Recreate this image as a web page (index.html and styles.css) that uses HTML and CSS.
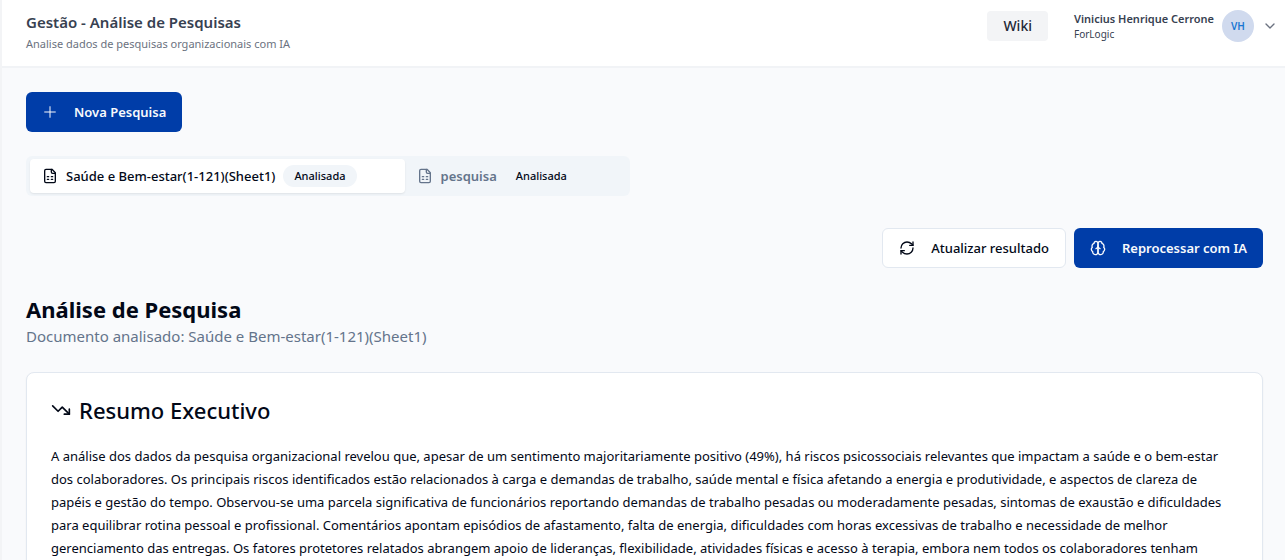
FILE: index.html
```html
<!DOCTYPE html>
<html lang="pt-BR">

<head>
    <meta charset="UTF-8">
    <meta name="viewport" content="width=device-width, initial-scale=1">
    <title>Gestão - Análise de Pesquisas</title>
    <link rel="stylesheet" href="styles.css">
</head>

<body>
    <header class="topbar">
        <div class="topbar-title">
            <h1>Gestão - Análise de Pesquisas</h1>
            <p>Analise dados de pesquisas organizacionais com IA</p>
        </div>
        <div class="topbar-right">
            <button type="button" class="wiki">Wiki</button>
            <button type="button" class="user">
                <span class="user-info">
                    <span class="user-name">Vinicius Henrique Cerrone</span>
                    <span class="user-company">ForLogic</span>
                </span>
                <span class="avatar">VH</span>
                <svg class="icon chevron" viewBox="0 0 24 24"><path d="m6 9 6 6 6-6"/></svg>
            </button>
        </div>
    </header>

    <main class="content">
        <button type="button" class="btn btn-primary">
            <svg class="icon thin" viewBox="0 0 24 24"><path d="M4 12h16M12 4v16"/></svg>
            Nova Pesquisa
        </button>

        <div class="tabs" role="tablist">
            <button type="button" class="tab active" role="tab" aria-selected="true">
                <svg class="icon" viewBox="0 0 24 24"><path d="M15 2H6a2 2 0 0 0-2 2v16a2 2 0 0 0 2 2h12a2 2 0 0 0 2-2V7Z"/><path d="M14 2v4a2 2 0 0 0 2 2h4M8 13h2M14 13h2M8 17h2M14 17h2"/></svg>
                <span>Saúde e Bem-estar(1-121)(Sheet1)</span>
                <span class="badge">Analisada</span>
            </button>
            <button type="button" class="tab" role="tab" aria-selected="false">
                <svg class="icon" viewBox="0 0 24 24"><path d="M15 2H6a2 2 0 0 0-2 2v16a2 2 0 0 0 2 2h12a2 2 0 0 0 2-2V7Z"/><path d="M14 2v4a2 2 0 0 0 2 2h4M8 13h2M14 13h2M8 17h2M14 17h2"/></svg>
                <span>pesquisa</span>
                <span class="badge">Analisada</span>
            </button>
        </div>

        <div class="actions">
            <button type="button" class="btn btn-outline">
                <svg class="icon" viewBox="0 0 24 24"><path d="M3 12a9 9 0 0 1 9-9 9.75 9.75 0 0 1 6.74 2.74L21 8"/><path d="M21 3v5h-5"/><path d="M21 12a9 9 0 0 1-9 9 9.75 9.75 0 0 1-6.74-2.74L3 16"/><path d="M8 16H3v5"/></svg>
                Atualizar resultado
            </button>
            <button type="button" class="btn btn-primary">
                <svg class="icon" viewBox="0 0 24 24"><path d="M12 5a3 3 0 1 0-5.997.125 4 4 0 0 0-2.526 5.77 4 4 0 0 0 .556 6.588A4 4 0 1 0 12 18Z"/><path d="M12 5a3 3 0 1 1 5.997.125 4 4 0 0 1 2.526 5.77 4 4 0 0 1-.556 6.588A4 4 0 1 1 12 18Z"/><path d="M15 13a4.5 4.5 0 0 1-3-4 4.5 4.5 0 0 1-3 4"/></svg>
                Reprocessar com IA
            </button>
        </div>

        <div class="heading">
            <h2>Análise de Pesquisa</h2>
            <p>Documento analisado: Saúde e Bem-estar(1-121)(Sheet1)</p>
        </div>

        <section class="card">
            <h3>
                <svg class="icon icon-lg" viewBox="0 0 24 24"><path d="m22 17-8.5-8.5-5 5L2 7"/><path d="M16 17h6v-6"/></svg>
                Resumo Executivo
            </h3>
            <p>
                A análise dos dados da pesquisa organizacional revelou que, apesar de um sentimento majoritariamente positivo (49%), há riscos psicossociais relevantes que impactam a saúde e o bem-estar<br>
                dos colaboradores. Os principais riscos identificados estão relacionados à carga e demandas de trabalho, saúde mental e física afetando a energia e produtividade, e aspectos de clareza de<br>
                papéis e gestão do tempo. Observou-se uma parcela significativa de funcionários reportando demandas de trabalho pesadas ou moderadamente pesadas, sintomas de exaustão e dificuldades<br>
                para equilibrar rotina pessoal e profissional. Comentários apontam episódios de afastamento, falta de energia, dificuldades com horas excessivas de trabalho e necessidade de melhor<br>
                gerenciamento das entregas. Os fatores protetores relatados abrangem apoio de lideranças, flexibilidade, atividades físicas e acesso à terapia, embora nem todos os colaboradores tenham
            </p>
        </section>
    </main>
</body>

</html>
```

FILE: styles.css
```css
* {
    box-sizing: border-box;
}

body {
    margin: 0;
    min-height: 100vh;
    border-left: 2px solid #f3f4f6;
    background: #f9fafc;
    color: #020817;
    font-family: "Noto Sans", "Open Sans", sans-serif;
    font-size: 13px;
    line-height: 20px;
}

h1,
h2,
h3,
p {
    margin: 0;
}

button {
    border: 0;
    padding: 0;
    background: none;
    color: inherit;
    font: inherit;
    cursor: pointer;
}

.icon {
    width: 16px;
    height: 16px;
    flex: none;
    fill: none;
    stroke: currentColor;
    stroke-width: 2;
    stroke-linecap: round;
    stroke-linejoin: round;
}

.thin {
    stroke-width: 1.5;
}

/* header */
.topbar {
    display: flex;
    justify-content: space-between;
    align-items: flex-start;
    height: 68px;
    padding: 10px 7px 0 24px;
    background: #fff;
    border-bottom: 2px solid #f1f3f6;
}

.topbar-title h1 {
    color: #374151;
    font-size: 15px;
    font-weight: 600;
    line-height: 24px;
}

.topbar-title p {
    color: #6b7280;
    font-size: 11px;
    line-height: 20px;
}

.topbar-right {
    display: flex;
    align-items: center;
    gap: 26px;
}

.wiki {
    padding: 5px 16px;
    border-radius: 4px;
    background: #f3f4f6;
    color: #1f2937;
    font-size: 14px;
    font-weight: 500;
}

.user {
    display: flex;
    align-items: center;
    gap: 8px;
}

.user-info {
    display: flex;
    flex-direction: column;
    color: #374151;
    text-align: left;
}

.user-name {
    font-size: 11px;
    font-weight: 600;
    line-height: 16px;
}

.user-company {
    font-size: 10px;
    line-height: 14px;
}

.avatar {
    width: 32px;
    border-radius: 50%;
    background: #d0daee;
    color: #1976d2;
    font-size: 10px;
    font-weight: 600;
    line-height: 32px;
    text-align: center;
}

.chevron {
    color: #6b7280;
}

/* page */
.content {
    display: flex;
    flex-direction: column;
    align-items: flex-start;
    padding: 24px 22px 24px 24px;
}

.btn {
    display: flex;
    align-items: center;
    gap: 16px;
    height: 40px;
    padding: 0 16px;
    border-radius: 6px;
    font-weight: 600;
    white-space: nowrap;
}

.btn-primary {
    background: #003da8;
    color: #f8fafc;
}

.btn-outline {
    border: 1px solid #e2e8f0;
    background: #fff;
    font-weight: 500;
}

.tabs {
    display: grid;
    grid-template-columns: auto auto;
    margin-top: 24px;
    padding: 3px 4px;
    border-radius: 6px;
    background: #f1f5f9;
    color: #64748b;
}

.tab {
    display: flex;
    align-items: center;
    gap: 8px;
    height: 34px;
    padding: 0 48px 0 12px;
    border-radius: 4px;
    font-weight: 600;
    white-space: nowrap;
}

.tab.active {
    background: #fff;
    color: #020817;
    box-shadow: 0 1px 2px rgba(0, 0, 0, 0.08);
    font-weight: 500;
}

.badge {
    padding: 3px 11px;
    border-radius: 11px;
    background: #f1f5f9;
    color: #020817;
    font-size: 11px;
    font-weight: 500;
    line-height: 16px;
}

.actions {
    display: flex;
    align-self: flex-end;
    gap: 8px;
    margin-top: 32px;
}

.heading {
    margin-top: 25px;
}

.heading h2 {
    font-size: 22px;
    font-weight: 700;
    line-height: 32px;
}

.heading p {
    color: #64748b;
    font-size: 15px;
    line-height: 22px;
}

.card {
    align-self: stretch;
    margin-top: 25px;
    padding: 24px;
    border: 1px solid #e2e8f0;
    border-radius: 8px;
    background: #fff;
    box-shadow: 0 1px 2px rgba(0, 0, 0, 0.05);
}

.card h3 {
    display: flex;
    align-items: center;
    gap: 8px;
    font-size: 22px;
    font-weight: 500;
    line-height: 26px;
}

.icon-lg {
    width: 20px;
    height: 20px;
}

.card p {
    margin-top: 22px;
    line-height: 23px;
}
```
